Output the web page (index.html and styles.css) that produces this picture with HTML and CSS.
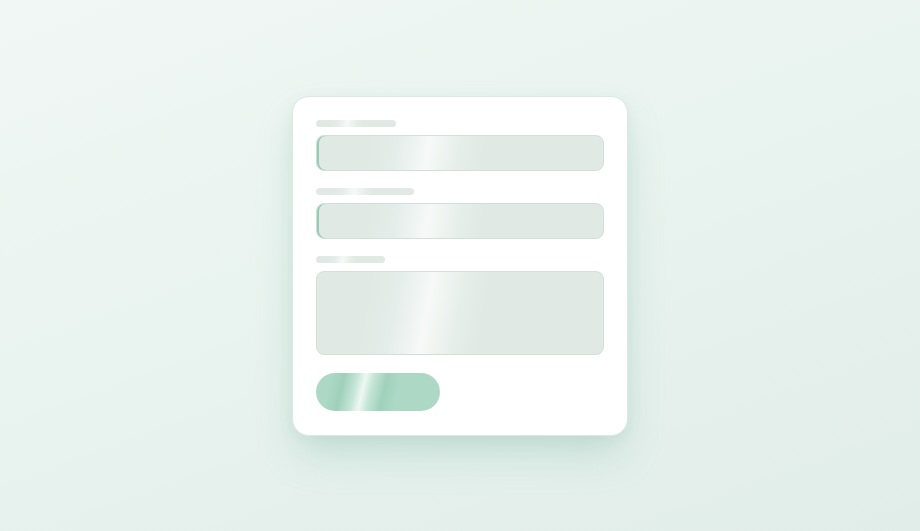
FILE: index.html
```html
<!DOCTYPE html>
<html lang="en">
<head>
<meta charset="utf-8">
<title>Form loading</title>
<link rel="stylesheet" href="styles.css">
</head>
<body>
<main class="stage">
  <form class="card" aria-busy="true" aria-label="Loading form">
    <div class="field">
      <span class="label sk w80"></span>
      <span class="input sk accent"></span>
    </div>
    <div class="field">
      <span class="label sk w98"></span>
      <span class="input sk accent"></span>
    </div>
    <div class="field">
      <span class="label sk w69"></span>
      <span class="textarea sk"></span>
    </div>
    <span class="button"></span>
  </form>
</main>
</body>
</html>
```
FILE: styles.css
```css
html, body {
  margin: 0;
  height: 100%;
}
body {
  background: linear-gradient(160deg, #f1f7f4 0%, #e9f3ef 45%, #e1ede9 100%);
  font-family: "Inter", "Liberation Sans", sans-serif;
}
.stage {
  height: 531px;
  display: flex;
  justify-content: center;
  padding-top: 96px;
  box-sizing: border-box;
}
.card {
  width: 336px;
  height: 340px;
  box-sizing: border-box;
  background: #ffffff;
  border: 1px solid #dbe9e3;
  border-radius: 17px;
  padding: 23px 23px 22px;
  box-shadow: 0 22px 40px -6px rgba(110, 175, 155, 0.30), 0 4px 14px rgba(120, 170, 150, 0.10);
  display: flex;
  flex-direction: column;
}
.field {
  display: flex;
  flex-direction: column;
  gap: 8px;
  margin-bottom: 17px;
}
.sk {
  display: block;
  background: linear-gradient(100deg,
    #e0e9e4 0%,
    #e0e9e4 18%,
    #e5edea 28%,
    #f6f9f7 39%,
    #e6eeea 50%,
    #e0e9e4 58%,
    #e0e9e4 100%);
}
.label {
  height: 7px;
  border-radius: 4px;
}
.w80 { width: 80px; }
.w98 { width: 98px; }
.w69 { width: 69px; }
.input, .textarea {
  box-sizing: border-box;
  width: 100%;
  border: 1px solid #d3e0da;
  border-radius: 8px;
}
.input { height: 36px; }
.textarea { height: 84px; }
.accent {
  box-shadow: inset 2px 0 0 #93cdb3;
}
.button {
  display: block;
  margin-top: 1px;
  width: 124px;
  height: 38px;
  border-radius: 19px;
  background: linear-gradient(103deg,
    #acd8c5 0%,
    #acd8c5 12%,
    #9fd0ba 22%,
    #c6e6d8 32%,
    #eef8f3 38%,
    #c6e6d8 44%,
    #a0d1bb 54%,
    #acd8c5 64%,
    #acd8c5 100%);
}
```
